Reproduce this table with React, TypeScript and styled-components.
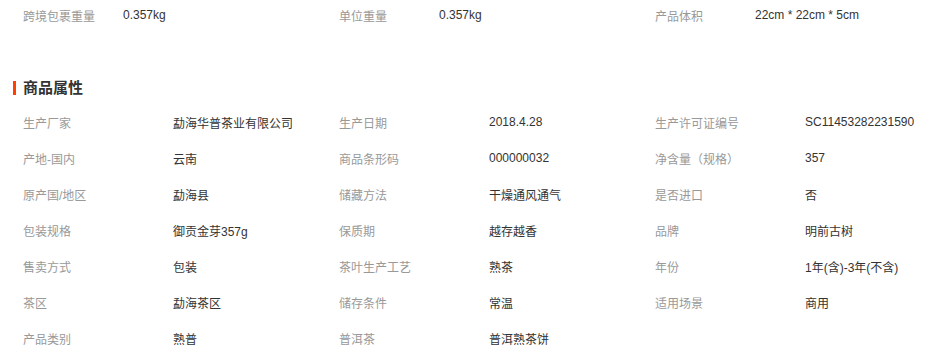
import { FC } from "react";
import styled, { createGlobalStyle } from "styled-components";

interface IAttr {
  label: string;
  value: string;
}

const topAttrs: IAttr[] = [
  { label: "跨境包裹重量", value: "0.357kg" },
  { label: "单位重量", value: "0.357kg" },
  { label: "产品体积", value: "22cm * 22cm * 5cm" },
];

const attrs: IAttr[] = [
  { label: "生产厂家", value: "勐海华普茶业有限公司" },
  { label: "生产日期", value: "2018.4.28" },
  { label: "生产许可证编号", value: "SC11453282231590" },
  { label: "产地-国内", value: "云南" },
  { label: "商品条形码", value: "000000032" },
  { label: "净含量（规格）", value: "357" },
  { label: "原产国/地区", value: "勐海县" },
  { label: "储藏方法", value: "干燥通风通气" },
  { label: "是否进口", value: "否" },
  { label: "包装规格", value: "御贡金芽357g" },
  { label: "保质期", value: "越存越香" },
  { label: "品牌", value: "明前古树" },
  { label: "售卖方式", value: "包装" },
  { label: "茶叶生产工艺", value: "熟茶" },
  { label: "年份", value: "1年(含)-3年(不含)" },
  { label: "茶区", value: "勐海茶区" },
  { label: "储存条件", value: "常温" },
  { label: "适用场景", value: "商用" },
  { label: "产品类别", value: "熟普" },
  { label: "普洱茶", value: "普洱熟茶饼" },
];

const App: FC = () => (
  <Page>
    <GlobalStyle />
    <Grid>
      {topAttrs.map((item) => (
        <Cell key={item.label} labelWidth={100} rowHeight={30}>
          <Label>{item.label}</Label>
          <Value>{item.value}</Value>
        </Cell>
      ))}
    </Grid>

    <SectionTitle>
      <Marker />
      商品属性
    </SectionTitle>

    <AttrGrid>
      {attrs.map((item) => (
        <Cell key={item.label} labelWidth={150} rowHeight={36}>
          <Label>{item.label}</Label>
          <Value>{item.value}</Value>
        </Cell>
      ))}
    </AttrGrid>
  </Page>
);

export default App;

const GlobalStyle = createGlobalStyle`
  body {
    margin: 0;
    background: #fff;
    font-family: "Liberation Sans", "Noto Sans CJK SC", sans-serif;
  }
`;

const Page = styled.div`
  width: 948px;
  padding-left: 23px;
  box-sizing: border-box;
`;

const Grid = styled.div`
  display: grid;
  grid-template-columns: repeat(3, 316px);
`;

const AttrGrid = styled(Grid)`
  margin-top: 8px;
`;

const Cell = styled.div<{ labelWidth: number; rowHeight: number }>`
  display: grid;
  grid-template-columns: ${({ labelWidth }) => labelWidth}px 1fr;
  align-items: center;
  height: ${({ rowHeight }) => rowHeight}px;

  font-size: 12px;
  white-space: nowrap;
`;

const Label = styled.span`
  color: #999;
`;

const Value = styled.span`
  color: #333;
`;

const SectionTitle = styled.div`
  display: flex;
  align-items: center;
  column-gap: 7px;
  height: 16px;
  margin: 50px 0 0 -10px;

  font-size: 15px;
  line-height: 16px;
  font-weight: 700;
  color: #333;
`;

const Marker = styled.span`
  width: 3px;
  height: 14px;
  background: #ff4000;
`;
